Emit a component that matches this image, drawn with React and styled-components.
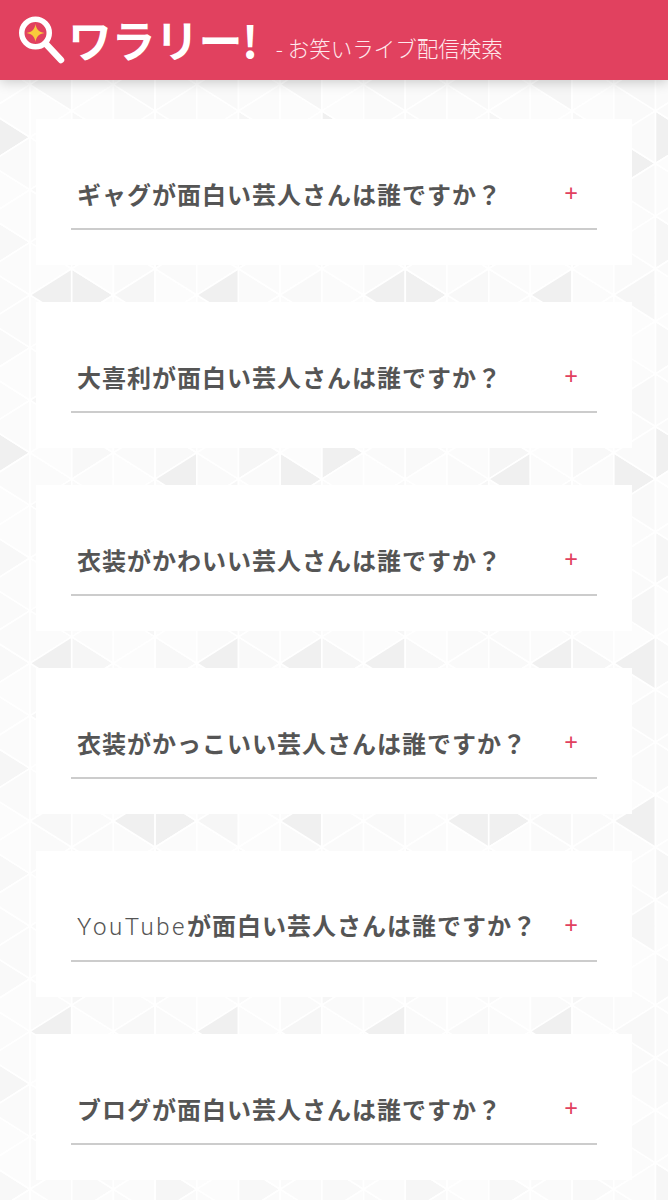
import React from "react";
import styled, { createGlobalStyle } from "styled-components";

const questions = [
  { title: "ギャグが面白い芸人さんは誰ですか\uFF1F" },
  { title: "大喜利が面白い芸人さんは誰ですか\uFF1F" },
  { title: "衣装がかわいい芸人さんは誰ですか\uFF1F" },
  { title: "衣装がかっこいい芸人さんは誰ですか\uFF1F" },
  { latin: "YouTube", title: "が面白い芸人さんは誰ですか\uFF1F" },
  { title: "ブログが面白い芸人さんは誰ですか\uFF1F" },
];

// darker triangles seen between the cards: [x centre mod 334, y centre]
const darkSpots = [
  [58, 295], [85, 295], [224, 295],
  [183, 479], [294, 479], [2, 453],
  [58, 663], [224, 663], [308, 663],
  [141, 820], [169, 820], [306, 820],
  [294, 163], [2, 137], [294, 340],
  [58, 1031], [224, 1031], [141, 1005],
];

const colWidth = 41.7;
const rowHeight = 52.6;

function shadeFor(cx, cy, i, k) {
  const mx = ((cx % 334) + 334) % 334;
  const dark = darkSpots.some(([x, y]) => {
    const dx = Math.abs(x - mx);
    return Math.min(dx, 334 - dx) < 12 && Math.abs(y - cy) < 14;
  });
  if (dark) return "#f0f0f0";
  const n = (i * 7 + k * 13 + i * k * 3) % 6;
  return ["#f9f9f9", "#fbfbfb", "#f6f6f6", "#fcfcfc", "#f8f8f8", "#fafafa"][n];
}

function buildPattern() {
  let polys = "";
  for (let i = 0; i < 19; i++) {
    // column 1 sits at x=30 with a node at y=32
    const x = 30 + (i - 1) * colWidth;
    const shift = i % 2 === 1 ? 0 : rowHeight / 2;
    for (let k = -1; k < 25; k++) {
      const y = 32 + shift + k * rowHeight;
      const a = `${x},${y} ${x},${y + rowHeight} ${x + colWidth},${y + rowHeight / 2}`;
      const b = `${x + colWidth},${y - rowHeight / 2} ${x + colWidth},${y + rowHeight / 2} ${x},${y}`;
      polys += `<polygon points="${a}" fill="${shadeFor(x + colWidth / 3, y + rowHeight / 2, i, k + 1)}"/>`;
      polys += `<polygon points="${b}" fill="${shadeFor(x + (2 * colWidth) / 3, y, i + 3, k + 3)}"/>`;
    }
  }
  const svg = `<svg xmlns="http://www.w3.org/2000/svg" width="668" height="1200"><g stroke="#fff" stroke-width="1.6" stroke-linejoin="round">${polys}</g></svg>`;
  return `url("data:image/svg+xml,${encodeURIComponent(svg)}")`;
}

const GlobalStyle = createGlobalStyle`
  html, body {
    margin: 0;
    padding: 0;
    background: #fff;
  }
  body {
    font-family: "Noto Sans CJK JP", "Noto Sans", sans-serif;
  }
`;

const Page = styled.div`
  width: 668px;
  min-height: 1200px;
  background-color: #fbfbfb;
  background-image: ${(p) => p.$pattern};
  background-repeat: no-repeat;
`;

const Header = styled.header`
  position: relative;
  display: flex;
  align-items: flex-start;
  height: 80px;
  padding-left: 18px;
  box-sizing: border-box;
  background: #e1415f;
  box-shadow: 0 2px 12px rgba(0, 0, 0, 0.2);
`;

const LogoMark = styled.svg`
  width: 50px;
  height: 50px;
  margin-top: 15px;
  flex: none;
`;

const LogoText = styled.div`
  margin-top: 9px;
  font-size: 44px;
  line-height: 60px;
  font-weight: 700;
  color: #fff;
  letter-spacing: -0.5px;
  white-space: nowrap;
`;

const Tagline = styled.div`
  margin-left: 18px;
  margin-top: 33px;
  font-size: 21.5px;
  line-height: 30px;
  font-weight: 300;
  color: #ffe9ed;
  white-space: nowrap;
`;

const CardList = styled.main`
  display: flex;
  flex-direction: column;
  gap: 37px;
  padding: 39px 36px 20px;
`;

const Card = styled.section`
  height: 146px;
  box-sizing: border-box;
  padding: 41px 35px 35px;
  background: #fff;
`;

const Question = styled.div`
  display: flex;
  align-items: center;
  justify-content: space-between;
  height: 70px;
  box-sizing: border-box;
  padding: 0 19px 0 6px;
  border-bottom: 2px solid #cccccc;
`;

const QuestionText = styled.h2`
  margin: 0;
  font-size: 24px;
  line-height: 34px;
  font-weight: 700;
  letter-spacing: 1px;
  color: #555;
  white-space: nowrap;
`;

const Latin = styled.span`
  font-family: Roboto, "Liberation Sans", sans-serif;
  font-weight: 300;
  letter-spacing: 2.5px;
`;

const Plus = styled.span`
  font-family: "Noto Sans", sans-serif;
  font-size: 24px;
  line-height: 24px;
  margin-top: -3px;
  color: #e1415f;
`;

function Logo() {
  return (
    <LogoMark viewBox="0 0 50 50">
      <circle cx="17.5" cy="18" r="13.75" fill="#e1415f" stroke="#fff" strokeWidth="5.5" />
      <path d="M17.5 9 C18.3 14.5 21 17.2 26.5 18 C21 18.8 18.3 21.5 17.5 27 C16.7 21.5 14 18.8 8.5 18 C14 17.2 16.7 14.5 17.5 9Z" fill="#f9cb3c" />
      <path d="M28 29 L43 45" stroke="#fff" strokeWidth="6.5" strokeLinecap="round" />
    </LogoMark>
  );
}

export default function App() {
  const pattern = buildPattern();
  return (
    <>
      <GlobalStyle />
      <Page $pattern={pattern}>
        <Header>
          <Logo />
          <LogoText>ワラリー!</LogoText>
          <Tagline>- お笑いライブ配信検索</Tagline>
        </Header>
        <CardList>
          {questions.map((q) => (
            <Card key={q.title + (q.latin || "")}>
              <Question>
                <QuestionText>
                  {q.latin && <Latin>{q.latin}</Latin>}
                  {q.title}
                </QuestionText>
                <Plus>+</Plus>
              </Question>
            </Card>
          ))}
        </CardList>
      </Page>
    </>
  );
}
